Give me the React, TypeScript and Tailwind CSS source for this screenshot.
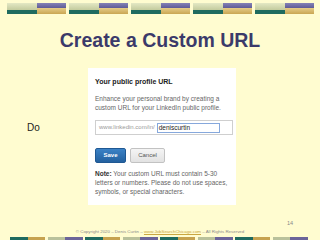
const TopBar = () => (
  <div className="flex w-[59px] h-[11px]">
    <div className="flex flex-col w-[30px]">
      <div className="h-[7px] bg-gradient-to-b from-[#e4e8c4] to-[#c3cb9d]" />
      <div className="h-[4px] bg-[#1f6b5f]" />
    </div>
    <div className="flex flex-col w-[29px]">
      <div className="h-[5px] bg-gradient-to-b from-[#8582b6] to-[#5f5b96]" />
      <div className="h-[6px] bg-gradient-to-b from-[#e6cc86] to-[#c9a653]" />
    </div>
  </div>
);

const BottomBar = ({ alt }: { alt: boolean }) => (
  <div className="flex w-[35px] h-[4px]">
    <div className={alt ? "w-1/2 bg-[#b9c19b]" : "w-1/2 bg-[#1e6a5f]"} />
    <div className={alt ? "w-1/2 bg-[#6b6499]" : "w-1/2 bg-[#c6a24f]"} />
  </div>
);

const App = () => {
  return (
    <div className="w-[320px] h-[240px] bg-[#fffcd0] flex flex-col overflow-hidden font-['Liberation_Sans',Arial,sans-serif]">
      <div className="flex gap-[3px] pt-[3px] pl-[7px]">
        {[0, 1, 2, 3, 4].map((i) => (
          <TopBar key={i} />
        ))}
      </div>

      {/* slide title */}
      <h1 className="mt-[16px] h-[20px] text-center text-[19.5px] leading-[20px] font-bold text-[#3b3a6a]">
        Create a Custom URL
      </h1>

      <div className="mt-[18px] flex">
        <div className="w-[88px] pt-[54px] pl-[27px]">
          <p className="text-[10px] leading-[12px] text-[#222]">Do</p>
        </div>

        {/* LinkedIn screenshot */}
        <div className="w-[148px] h-[137px] bg-white pt-[10px] pl-[7px] pr-[3px]">
          <p className="text-[7px] leading-[8px] font-bold text-[#222]">Your public profile URL</p>
          <p className="mt-[8px] text-[6.5px] leading-[9px] text-[#666]">
            Enhance your personal brand by creating a
            <br />
            custom URL for your LinkedIn public profile.
          </p>

          <div className="mt-[8px] w-[138px] h-[15px] border border-[#cfcfcf] flex items-center pl-[3px]">
            <span className="text-[6px] text-[#999] whitespace-nowrap">www.linkedin.com/in/</span>
            <div className="ml-[2px] w-[63px] h-[10px] border border-[#86a8dc] flex items-center pl-[1px]">
              <span className="text-[6.5px] text-[#222]">deniscurtin</span>
            </div>
          </div>

          <div className="mt-[13px] flex gap-[4px]">
            <button className="w-[31px] h-[15px] rounded-[2px] border border-[#1f5893] bg-gradient-to-b from-[#3b82c6] to-[#23619f] text-white text-[6px] font-bold">
              Save
            </button>
            <button className="w-[35px] h-[15px] rounded-[2px] border border-[#c2c2c2] bg-gradient-to-b from-[#f5f5f5] to-[#e2e2e2] text-[#555] text-[6px]">
              Cancel
            </button>
          </div>

          <p className="mt-[6px] text-[6.5px] leading-[9px] text-[#666]">
            <span className="font-bold text-[#333]">Note:</span> Your custom URL must contain 5-30
            <br />
            letters or numbers. Please do not use spaces,
            <br />
            symbols, or special characters.
          </p>
        </div>
      </div>

      <p className="mt-[15px] pr-[27px] text-right text-[5.5px] leading-[6px] text-[#888]">14</p>

      <p className="mt-[3px] text-center text-[4.4px] leading-[5px] text-[#8a8a8a] whitespace-nowrap">
        © Copyright 2020 – Denis Curtin –{" "}
        <span className="text-[#c9a640] underline">www.JobSearchChicago.com</span> – All Rights Reserved
      </p>

      <div className="mt-[3px] flex gap-[2.5px] pl-[10px]">
        {[0, 1, 2, 3, 4, 5, 6, 7].map((i) => (
          <BottomBar key={i} alt={i % 2 === 1} />
        ))}
      </div>
    </div>
  );
};

export default App;
